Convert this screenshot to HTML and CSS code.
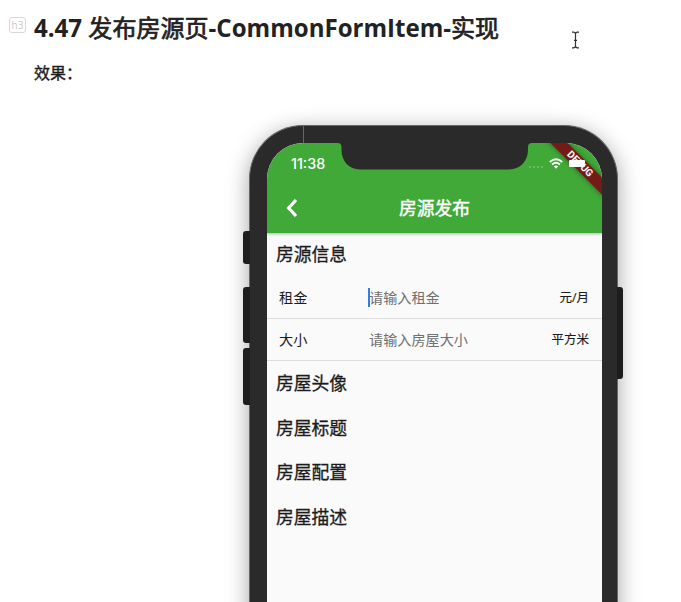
FILE: index.html
```html
<!DOCTYPE html>
<html lang="zh-CN">
<head>
<meta charset="utf-8">
<title>4.47 发布房源页</title>
<link rel="stylesheet" href="styles.css">
</head>
<body>
<main class="doc">
  <header class="heading">
    <span class="level">h3</span>
    <h3 class="title">4.47 <span class="cjk">发布房源页</span>-CommonFormItem-<span class="cjk">实现</span></h3>
    <svg class="pointer" width="9" height="18" viewBox="0 0 9 18"><path d="M1 1.2h1.5q2 0 2 2v11.600q0 2-2 2H1M8 1.200H6.500q-2 0-2 2M8 16.800H6.500q-2 0-2-2M3 9.300h3" fill="none" stroke="#333" stroke-width="1.200"/></svg>
  </header>
  <p class="effect">效果：</p>
  <section class="phone">
    <i class="key mute"></i><i class="key up"></i><i class="key down"></i><i class="key power"></i><i class="seam"></i>
    <div class="screen">
      <div class="top">
        <div class="status">
          <span class="time">11:38</span>
          <span class="signal"><i></i><i></i><i></i><i></i></span>
          <svg class="wifi" width="14" height="11" viewBox="0 0 14 11"><g fill="none" stroke="#fff" stroke-width="1.900"><path d="M.8 4Q7-1.400 13.200 4"/><path d="M3.100 6.500Q7 3.200 10.900 6.500"/></g><path d="M4.900 8.400Q7 6.800 9.100 8.400L7 10.700z" fill="#fff"/></svg>
        </div>
        <svg class="notch" width="201" height="28" viewBox="0 0 201 28"><path d="M0 0H201V1H198Q194 1 194 5V8C194 19 186 27.500 175 27.500H26C15 27.500 7.500 19 7.500 8V5Q7.500 1 3.500 1H0z" fill="#2a2a2a"/></svg>
        <nav class="bar">
          <svg class="back" width="12" height="20" viewBox="0 0 12 20"><path d="M10 2L2.600 10L10 18" fill="none" stroke="#fff" stroke-width="3.200"/></svg>
          <span>房源发布</span>
        </nav>
        <div class="ribbon">DEBUG</div>
        <i class="battery"></i>
      </div>
      <h4 class="group first">房源信息</h4>
      <div class="field"><span class="label">租金</span><span class="input focused">请输入租金</span><span class="unit">元/月</span></div>
      <div class="field"><span class="label">大小</span><span class="input">请输入房屋大小</span><span class="unit">平方米</span></div>
      <h4 class="group">房屋头像</h4>
      <h4 class="group">房屋标题</h4>
      <h4 class="group">房屋配置</h4>
      <h4 class="group">房屋描述</h4>
    </div>
  </section>
</main>
</body>
</html>
```
FILE: styles.css
```css
* { box-sizing: border-box; }
body {
  margin: 0;
  background: #fff;
  color: #1c1c1c;
  font-family: "Open Sans", "Noto Sans CJK SC", sans-serif;
}
h3, h4, p { margin: 0; }
.doc { height: 602px; overflow: hidden; }
.heading {
  position: relative;
  display: flex;
  align-items: center;
  height: 57px;
  padding: 0 0 2px 9px;
}
.level {
  width: 17px;
  height: 16px;
  margin: 0 8px 6px 0;
  border: 1px solid #d8d8d8;
  border-radius: 3px;
  color: #c8c8c8;
  font-size: 10px;
  line-height: 14px;
  text-align: center;
}
.title {
  color: #222;
  font-size: 24.050px;
  font-weight: 700;
  line-height: 34px;
  white-space: nowrap;
}
.cjk { font-weight: 400; -webkit-text-stroke: .7px #222; }
.pointer { position: absolute; left: 571px; top: 31px; }
.effect {
  height: 68px;
  padding-left: 34px;
  font-size: 16px;
  line-height: 32px;
  -webkit-text-stroke: .35px #1c1c1c;
}
.phone {
  position: relative;
  width: 369px;
  height: 560px;
  margin-left: 249px;
  padding: 17px 15px 0 17px;
  border: 1px solid #666;
  border-bottom: 0;
  border-radius: 54px 54px 0 0;
  background: #2a2a2a;
  box-shadow: 0 5px 22px rgba(0, 0, 0, .36);
}
.key {
  position: absolute;
  left: -7px;
  width: 7px;
  border-radius: 3px 0 0 3px;
  background: #1d1d1d;
}
.mute { top: 105px; height: 33px; }
.up { top: 161px; height: 56px; }
.down { top: 222px; height: 57px; }
.power { left: auto; right: -6px; top: 161px; width: 6px; height: 92px; border-radius: 0 3px 3px 0; }
.seam { position: absolute; left: 53px; top: 0; width: 1px; height: 17px; background: #666; }
.screen {
  height: 541px;
  overflow: hidden;
  border-radius: 36px 36px 0 0;
  background: #fafafa;
}
.top {
  position: relative;
  height: 90px;
  overflow: hidden;
  border-radius: 36px 36px 0 0;
  background: #41a938;
  box-shadow: 0 1px 3px rgba(0, 0, 0, .3);
  color: #fff;
}
.status {
  display: flex;
  align-items: center;
  height: 41px;
  padding-left: 24px;
}
.time { width: 238px; font-family: Inter, sans-serif; font-size: 14.300px; font-weight: 500; }
.signal { display: flex; gap: 2px; width: 19px; padding-top: 7px; }
.signal i { width: 2px; height: 2px; border-radius: 1px; background: #75c06d; }
.wifi { margin-left: 1px; }
.notch { position: absolute; left: 67px; top: -1px; }
.bar {
  display: flex;
  align-items: center;
  height: 47px;
  padding-left: 19px;
  font-size: 17.800px;
  -webkit-text-stroke: .4px #fff;
}
.bar span { margin: 0 0 2px 101px; }
.ribbon {
  position: absolute;
  left: 273px;
  top: 15px;
  width: 80px;
  height: 12px;
  transform: rotate(45deg);
  background: #741b17;
  box-shadow: 0 0 5px rgba(0, 0, 0, .5);
  font: 700 10px/12px Roboto, sans-serif;
  text-align: center;
}
.battery { position: absolute; left: 302px; top: 17px; width: 16px; height: 7px; border-radius: 1px; background: #fff; }
.group {
  height: 44.600px;
  padding-left: 9px;
  font-size: 17.800px;
  font-weight: 400;
  line-height: 44.600px;
  -webkit-text-stroke: .3px #1c1c1c;
}
.first { height: 44px; line-height: 43px; }
.field {
  display: flex;
  align-items: center;
  height: 42px;
  padding: 0 13px 2px 12px;
  border-bottom: 1px solid #dcdcdc;
  font-size: 14.150px;
}
.label { width: 89px; }
.input { position: relative; flex: 1; padding-left: 1px; color: #707070; }
.focused::before { content: ""; position: absolute; left: 0; top: 1px; width: 2px; height: 19px; background: #3180d5; }
.unit { font-size: 12.500px; -webkit-text-stroke: .15px #1c1c1c; }
```
